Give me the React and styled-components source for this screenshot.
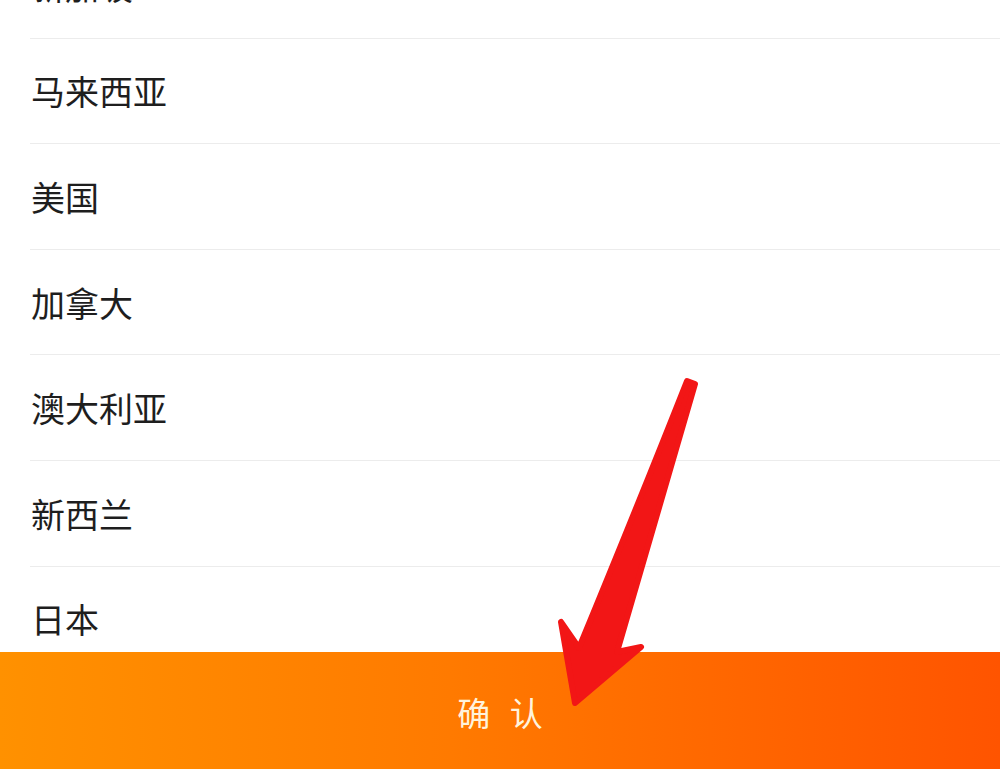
import React from 'react';
import styled, {createGlobalStyle} from "styled-components";

const GlobalStyle = createGlobalStyle`
    html, body {
        margin: 0;
        padding: 0;
        background: #fff;
    }
    body {
        font-family: "Noto Sans CJK SC", "Noto Sans", sans-serif;
    }
`

const Page = styled.div`
    position: relative;
    width: 100vw;
    height: 100vh;
    display: flex;
    flex-direction: column;
    overflow: hidden;
    background: #fff;
`

const ListWrap = styled.div`
    flex: 1;
    overflow: hidden;
`

// list is scrolled a bit, first row only half visible
const CountryList = styled.ul`
    list-style: none;
    margin: -67px 0 0 0;
    padding: 0 0 0 30px;
`

const CountryRow = styled.li`
    height: 105.6px;
    box-sizing: border-box;
    display: flex;
    align-items: center;
    padding-left: 1px;
    border-bottom: 1px solid #ececec;
    font-size: 34px;
    color: #1e1e1e;
`

const ConfirmBar = styled.button`
    flex: none;
    height: 117px;
    border: none;
    margin: 0;
    padding: 3px 0 0 0;
    background: linear-gradient(90deg, #ff9100 0%, #ff7a00 45%, #ff5400 100%);
    color: #fff3dc;
    font-family: "Noto Sans CJK SC", sans-serif;
    font-size: 33px;
    letter-spacing: 6px;
    text-indent: 6px;
    display: flex;
    align-items: center;
    justify-content: center;
`

const Arrow = styled.svg`
    position: absolute;
    left: 0;
    top: 0;
    width: 1000px;
    height: 769px;
    pointer-events: none;
`

const countries = ["新加坡", "马来西亚", "美国", "加拿大", "澳大利亚", "新西兰", "日本"]

const App = () => {
    const list = countries.map(c => <CountryRow key={c}>{c}</CountryRow>)

    return (
        <Page>
            <GlobalStyle/>
            <ListWrap>
                <CountryList>
                    {list}
                </CountryList>
            </ListWrap>
            <ConfirmBar>确 认</ConfirmBar>
            <Arrow viewBox="0 0 1000 769">
                <path
                    d="M687 381 Q640 500 579 648 L561 622 L575 703 L641 647 L617 652 Q655 520 695 384 Z"
                    fill="#f21616"
                    stroke="#f21616"
                    strokeWidth="6"
                    strokeLinejoin="round"
                />
            </Arrow>
        </Page>
    );
};

export default App;
